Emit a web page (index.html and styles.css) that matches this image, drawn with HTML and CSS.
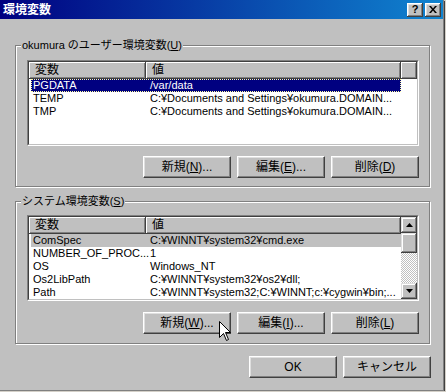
FILE: index.html
```html
<!DOCTYPE html>
<html lang="ja">
<head>
<meta charset="utf-8">
<link rel="stylesheet" href="styles.css">
</head>
<body>
<div class="win">
  <div class="title">
    <span class="ttext">環境変数</span>
    <div class="tbtns">
      <span class="tb">?</span>
      <span class="tb"><svg width="8" height="7" viewBox="0 0 8 7"><path d="M0 0h2l2 2.5L6 0h2L5 3.5 8 7H6L4 4.5 2 7H0l3-3.5z" fill="#000"/></svg></span>
    </div>
  </div>
  <div class="content">
    <div class="group g1">
      <div class="legend">okumura のユーザー環境変数(<u>U</u>)</div>
      <div class="list">
        <div class="list-in">
          <div class="main">
            <div class="hdr">
              <div class="hc c1">変数</div>
              <div class="hc c2">値</div>
              <div class="hc c3"></div>
            </div>
            <div class="row sel"><span class="k">PGDATA</span><span class="v">/var/data</span></div>
            <div class="row"><span class="k">TEMP</span><span class="v">C:¥Documents and Settings¥okumura.DOMAIN...</span></div>
            <div class="row"><span class="k">TMP</span><span class="v">C:¥Documents and Settings¥okumura.DOMAIN...</span></div>
          </div>
        </div>
      </div>
      <div class="btnrow">
        <div class="btn">新規(<u>N</u>)...</div>
        <div class="btn">編集(<u>E</u>)...</div>
        <div class="btn">削除(<u>D</u>)</div>
      </div>
    </div>
    <div class="group g2">
      <div class="legend">システム環境変数(<u>S</u>)</div>
      <div class="list">
        <div class="list-in">
          <div class="main">
            <div class="hdr">
              <div class="hc c1">変数</div>
              <div class="hc c2 wide">値</div>
            </div>
            <div class="row sel2"><span class="k">ComSpec</span><span class="v">C:¥WINNT¥system32¥cmd.exe</span></div>
            <div class="row"><span class="k">NUMBER_OF_PROC...</span><span class="v">1</span></div>
            <div class="row"><span class="k">OS</span><span class="v">Windows_NT</span></div>
            <div class="row"><span class="k">Os2LibPath</span><span class="v">C:¥WINNT¥system32¥os2¥dll;</span></div>
            <div class="row"><span class="k">Path</span><span class="v">C:¥WINNT¥system32;C:¥WINNT;c:¥cygwin¥bin;...</span></div>
          </div>
          <div class="sbar">
            <div class="sbtn"><svg width="7" height="4" viewBox="0 0 7 4"><path d="M3.5 0L7 4H0z" fill="#000"/></svg></div>
            <div class="thumb"></div>
            <div class="track"></div>
            <div class="sbtn"><svg width="7" height="4" viewBox="0 0 7 4"><path d="M0 0h7L3.5 4z" fill="#000"/></svg></div>
          </div>
        </div>
      </div>
      <div class="btnrow">
        <div class="btn">新規(<u>W</u>)...</div>
        <div class="btn">編集(<u>I</u>)...</div>
        <div class="btn">削除(<u>L</u>)</div>
      </div>
    </div>
    <div class="foot">
      <div class="btn">OK</div>
      <div class="btn">キャンセル</div>
    </div>
  </div>
  <svg class="cursor" width="13" height="21" viewBox="0 0 13 21"><path d="M0.5 0.5V16.5L4.5 12.5L7.5 19.5L9.5 18.5L6.5 11.5H11.5Z" fill="#fff" stroke="#000" stroke-width="1"/></svg>
</div>
</body>
</html>
```
FILE: styles.css
```css
* { box-sizing: border-box; }
body {
  margin: 0;
  background: #d4d0c8;
  font-family: "Liberation Sans", "Noto Sans CJK JP", sans-serif;
  font-size: 12px;
  color: #000;
}
u { text-decoration: underline; text-underline-offset: 1px; }
.win {
  position: relative;
  width: 444px;
  height: 391px;
  background: #c0c0c0;
  border-right: 1px solid #808080;
  border-bottom: 1px solid #808080;
  box-shadow: 1px 1px 0 #404040;
  display: flex;
  flex-direction: column;
}
.title {
  height: 19px;
  background: linear-gradient(90deg, #000080, #1084d0);
  display: flex;
  align-items: center;
  justify-content: space-between;
  padding: 0 2px 0 3px;
}
.ttext {
  color: #fff;
  font-weight: bold;
  font-size: 12px;
  line-height: 14px;
}
.tbtns { display: flex; gap: 2px; }
.tb {
  width: 16px;
  height: 14px;
  background: #c0c0c0;
  box-shadow: inset -1px -1px #404040, inset 1px 1px #fff, inset -2px -2px #808080, inset 2px 2px #dfdfdf;
  display: flex;
  align-items: center;
  justify-content: center;
  font-weight: bold;
  font-size: 11px;
  line-height: 11px;
  padding-bottom: 1px;
}
.content {
  padding: 26px 0 0 15px;
  display: flex;
  flex-direction: column;
}
.group {
  position: relative;
  width: 415px;
  border: 1px solid #808080;
  box-shadow: inset 1px 1px #fff, 1px 1px #fff;
  padding-left: 11px;
}
.g1 { height: 142px; padding-top: 14px; }
.g2 { height: 143px; padding-top: 13px; margin-top: 14px; }
.legend {
  position: absolute;
  top: -8px;
  left: 5px;
  background: #c0c0c0;
  padding: 0 1px;
  line-height: 14px;
  font-size: 11px;
}
.list {
  width: 392px;
  height: 86px;
  border: 1px solid;
  border-color: #808080 #fff #fff #808080;
}
.list-in {
  height: 100%;
  border: 1px solid;
  border-color: #404040 #c0c0c0 #c0c0c0 #404040;
  background: #fff;
  display: flex;
}
.main { flex: 1; min-width: 0; }
.hdr { display: flex; height: 17px; }
.hc {
  height: 17px;
  background: #c0c0c0;
  box-shadow: inset -1px -1px #404040, inset 1px 1px #fff, inset -2px -2px #808080;
  line-height: 17px;
  padding-left: 6px;
  flex-shrink: 0;
}
.c1 { width: 117px; }
.c2 { width: 255px; }
.c3 { flex: 1; }
.wide { flex: 1; }
.row {
  display: flex;
  height: 13px;
  line-height: 13px;
  margin-left: 2px;
  width: 370px;
  white-space: nowrap;
  font-size: 11px;
}
.row .k { width: 115px; flex-shrink: 0; padding-left: 2px; }
.row .v { padding-left: 4px; }
.sel {
  background: #000080;
  color: #fff;
  outline: 1px dotted #ffffa0;
  outline-offset: -1px;
}
.sel2 { background: #c0c0c0; }
.sbar {
  width: 16px;
  display: flex;
  flex-direction: column;
}
.sbtn, .thumb {
  height: 16px;
  background: #c0c0c0;
  box-shadow: inset -1px -1px #404040, inset 1px 1px #dfdfdf, inset -2px -2px #808080, inset 2px 2px #fff;
  display: flex;
  align-items: center;
  justify-content: center;
}
.thumb { height: 20px; }
.track {
  flex: 1;
  background: repeating-conic-gradient(#fff 0 25%, #c0c0c0 0 50%) 0 0 / 2px 2px;
}
.btnrow {
  display: flex;
  gap: 6px;
  margin-left: 116px;
}
.g1 .btnrow { margin-top: 10px; }
.g2 .btnrow { margin-top: 11px; }
.btn {
  width: 88px;
  height: 22px;
  background: #c0c0c0;
  border: 1px solid;
  border-color: #fff #404040 #404040 #fff;
  box-shadow: inset -1px -1px #808080, inset 1px 1px #dfdfdf;
  display: flex;
  align-items: center;
  justify-content: center;
  line-height: 14px;
}
.foot {
  display: flex;
  gap: 6px;
  margin: 12px 0 0 234px;
}
.cursor {
  position: absolute;
  left: 219px;
  top: 321px;
}
```
